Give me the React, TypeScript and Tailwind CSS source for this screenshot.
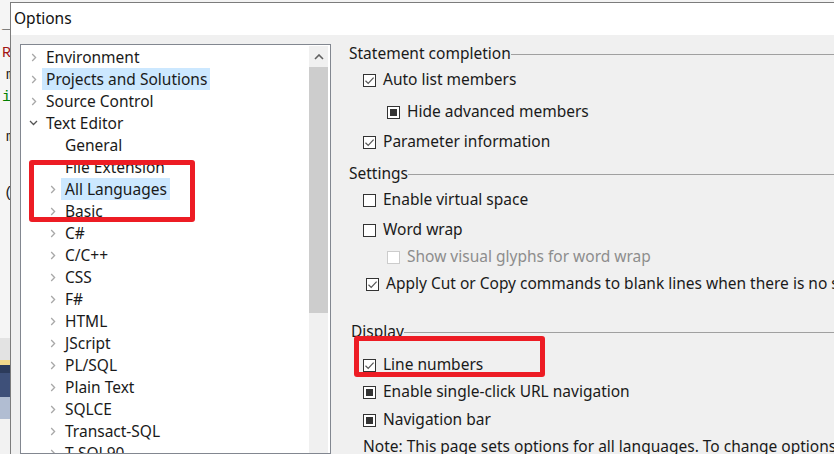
import React from 'react';

const UI_FONT = { fontFamily: '"Noto Sans", "Open Sans", sans-serif' };

const Chevron = ({ open = false }: { open?: boolean }) =>
  open ? (
    <svg width="9" height="6" viewBox="0 0 9 6" className="shrink-0">
      <path d="M1 1 L4.5 4.5 L8 1" fill="none" stroke="#555" strokeWidth="1.3" />
    </svg>
  ) : (
    <svg width="6" height="9" viewBox="0 0 6 9" className="shrink-0">
      <path d="M1.2 1 L4.6 4.5 L1.2 8" fill="none" stroke="#a8a8a8" strokeWidth="1.3" />
    </svg>
  );

interface TreeRowProps {
  label: string;
  level: 0 | 1;
  chevron?: 'closed' | 'open' | 'none';
  selected?: boolean;
}

const TreeRow: React.FC<TreeRowProps> = ({ label, level, chevron = 'closed', selected }) => (
  <div className={`h-[22px] flex items-center shrink-0 ${level === 0 ? 'pl-[10px]' : 'pl-[29px]'}`}>
    <div className="w-[11px] flex items-center justify-start">
      {chevron === 'closed' && <Chevron />}
      {chevron === 'open' && <div className="-ml-[2px] flex"><Chevron open /></div>}
    </div>
    <span className={`h-[22px] flex items-center pt-[1px] pl-[4px] pr-[3px] text-[15.5px] text-[#1a1a1a] whitespace-nowrap ${selected ? 'bg-[#cce8ff]' : ''}`}>
      {label}
    </span>
  </div>
);

type BoxState = 'checked' | 'empty' | 'mixed' | 'disabled';

const Box = ({ state }: { state: BoxState }) => (
  <div
    className={`w-[13px] h-[13px] shrink-0 flex items-center justify-center bg-white border ${
      state === 'disabled' ? 'border-[#cccccc]' : 'border-[#333333]'
    }`}
  >
    {state === 'checked' && (
      <svg width="11" height="11" viewBox="0 0 11 11">
        <path d="M1.5 5.8 L4.2 8.4 L9.6 2.6" fill="none" stroke="#555" strokeWidth="1.2" />
      </svg>
    )}
    {state === 'mixed' && <div className="w-[7px] h-[7px] bg-[#333333]" />}
  </div>
);

interface OptProps {
  label: string;
  state: BoxState;
  indent: string;
  mt: string;
}

const Opt: React.FC<OptProps> = ({ label, state, indent, mt }) => (
  <div className={`h-[22px] flex items-center shrink-0 ${indent} ${mt}`}>
    <Box state={state} />
    <span className={`ml-[7px] text-[15.5px] whitespace-nowrap ${state === 'disabled' ? 'text-[#8d8d8d]' : 'text-[#1a1a1a]'}`}>
      {label}
    </span>
  </div>
);

const GroupHeader = ({ label, mt, indent = 'pl-0' }: { label: string; mt: string; indent?: string }) => (
  <div className={`h-[22px] flex items-center shrink-0 ${mt} ${indent}`}>
    <span className="text-[15.5px] text-[#1a1a1a] whitespace-nowrap">{label}</span>
    <div className="flex-1 h-px bg-[#a0a0a0] mt-[1px]" />
  </div>
);

const languages = ['C#', 'C/C++', 'CSS', 'F#', 'HTML', 'JScript', 'PL/SQL', 'Plain Text', 'SQLCE', 'Transact-SQL', 'T-SQL90'];

export default function App() {
  return (
    <div className="w-[834px] h-[454px] overflow-hidden relative flex bg-[#f3f3f3]" style={UI_FONT}>
      {/* editor behind the dialog */}
      <div className="w-[10px] shrink-0 flex flex-col overflow-hidden bg-[#f5f5f5] font-['Liberation_Mono',monospace] text-[15px] leading-none">
        <div className="h-[338px] flex flex-col items-end overflow-hidden">
          <span className="mt-[17px] h-[14px] text-[#222] -mr-[1px]">_</span>
          <span className="mt-[15px] h-[14px] text-[#a31515] -mr-[1px]">R</span>
          <span className="mt-[8px] h-[14px] text-[#222] -mr-[5px]">m</span>
          <span className="mt-[8px] h-[14px] text-[#008000] -mr-[1px]">i</span>
          <span className="mt-[26px] h-[14px] text-[#222] -mr-[5px]">m</span>
          <span className="mt-[42px] h-[14px] text-[#222] -mr-[3px]">(</span>
        </div>
        <div className="h-[22px] bg-[#e3e3e3]" />
        <div className="h-[5px] bg-[#f2d98c]" />
        <div className="h-[8px] bg-[#2c3b5b]" />
        <div className="h-[24px] bg-[#3e5079]" />
        <div className="h-[22px] bg-[#b1bdd2]" />
        <div className="flex-1 bg-[#f2f2f2]" />
      </div>

      {/* dialog */}
      <div className="flex-1 mt-[2px] flex flex-col border-l border-t border-[#7c7c7c] bg-[#f0f0f0]">
        <div className="h-[32px] bg-white flex items-center pl-[3px] shrink-0">
          <span className="text-[15.5px] text-[#111]">Options</span>
        </div>

        <div className="flex-1 flex min-h-0">
          {/* tree */}
          <div className="ml-[9px] mt-[9px] w-[311px] border border-[#828790] bg-white flex shrink-0 overflow-hidden">
            <div className="flex-1 flex flex-col pt-[1px] overflow-hidden">
              <TreeRow label="Environment" level={0} />
              <TreeRow label="Projects and Solutions" level={0} selected />
              <TreeRow label="Source Control" level={0} />
              <TreeRow label="Text Editor" level={0} chevron="open" />
              <TreeRow label="General" level={1} chevron="none" />
              <TreeRow label="File Extension" level={1} chevron="none" />
              <TreeRow label="All Languages" level={1} selected />
              <TreeRow label="Basic" level={1} />
              {languages.map(l => (
                <TreeRow key={l} label={l} level={1} />
              ))}
            </div>
            <div className="w-[19px] mt-[1px] mr-[2px] flex flex-col bg-[#f0f0f0] shrink-0">
              <div className="h-[21px] flex items-center justify-center">
                <svg width="10" height="6" viewBox="0 0 10 6">
                  <path d="M1 5 L5 1 L9 5" fill="none" stroke="#606060" strokeWidth="1.6" />
                </svg>
              </div>
              <div className="h-[246px] bg-[#cdcdcd]" />
            </div>
          </div>

          {/* option page */}
          <div className="flex-1 flex flex-col pt-[8px] pl-[18px] overflow-hidden">
            <GroupHeader label="Statement completion" mt="mt-0" />
            <Opt label="Auto list members" state="checked" indent="pl-[14px]" mt="mt-[4px]" />
            <Opt label="Hide advanced members" state="mixed" indent="pl-[38px]" mt="mt-[10px]" />
            <Opt label="Parameter information" state="checked" indent="pl-[14px]" mt="mt-[8px]" />
            <GroupHeader label="Settings" mt="mt-[10px]" />
            <Opt label="Enable virtual space" state="empty" indent="pl-[14px]" mt="mt-[4px]" />
            <Opt label="Word wrap" state="empty" indent="pl-[14px]" mt="mt-[8px]" />
            <Opt label="Show visual glyphs for word wrap" state="disabled" indent="pl-[38px]" mt="mt-[5px]" />
            <Opt label="Apply Cut or Copy commands to blank lines when there is no selection" state="checked" indent="pl-[17px]" mt="mt-[5px]" />
            <GroupHeader label="Display" mt="mt-[26px]" indent="pl-[2px]" />
            <Opt label="Line numbers" state="checked" indent="pl-[14px]" mt="mt-[11px]" />
            <Opt label="Enable single-click URL navigation" state="mixed" indent="pl-[14px]" mt="mt-[5px]" />
            <Opt label="Navigation bar" state="mixed" indent="pl-[14px]" mt="mt-[6px]" />
            <div className="h-[22px] flex items-center shrink-0 pl-[14px] mt-[5px]">
              <span className="text-[15.5px] text-[#1a1a1a] whitespace-nowrap">
                Note: This page sets options for all languages. To change options for only one language, select that language.
              </span>
            </div>
          </div>
        </div>
      </div>

      {/* red annotation frames */}
      <div className="absolute left-[29px] top-[160px] w-[166px] h-[62px] border-[5px] border-[#ed1c24] rounded-[3px] pointer-events-none" />
      <div className="absolute left-[354px] top-[336px] w-[191px] h-[41px] border-[5px] border-[#ed1c24] rounded-[3px] pointer-events-none" />
    </div>
  );
}
